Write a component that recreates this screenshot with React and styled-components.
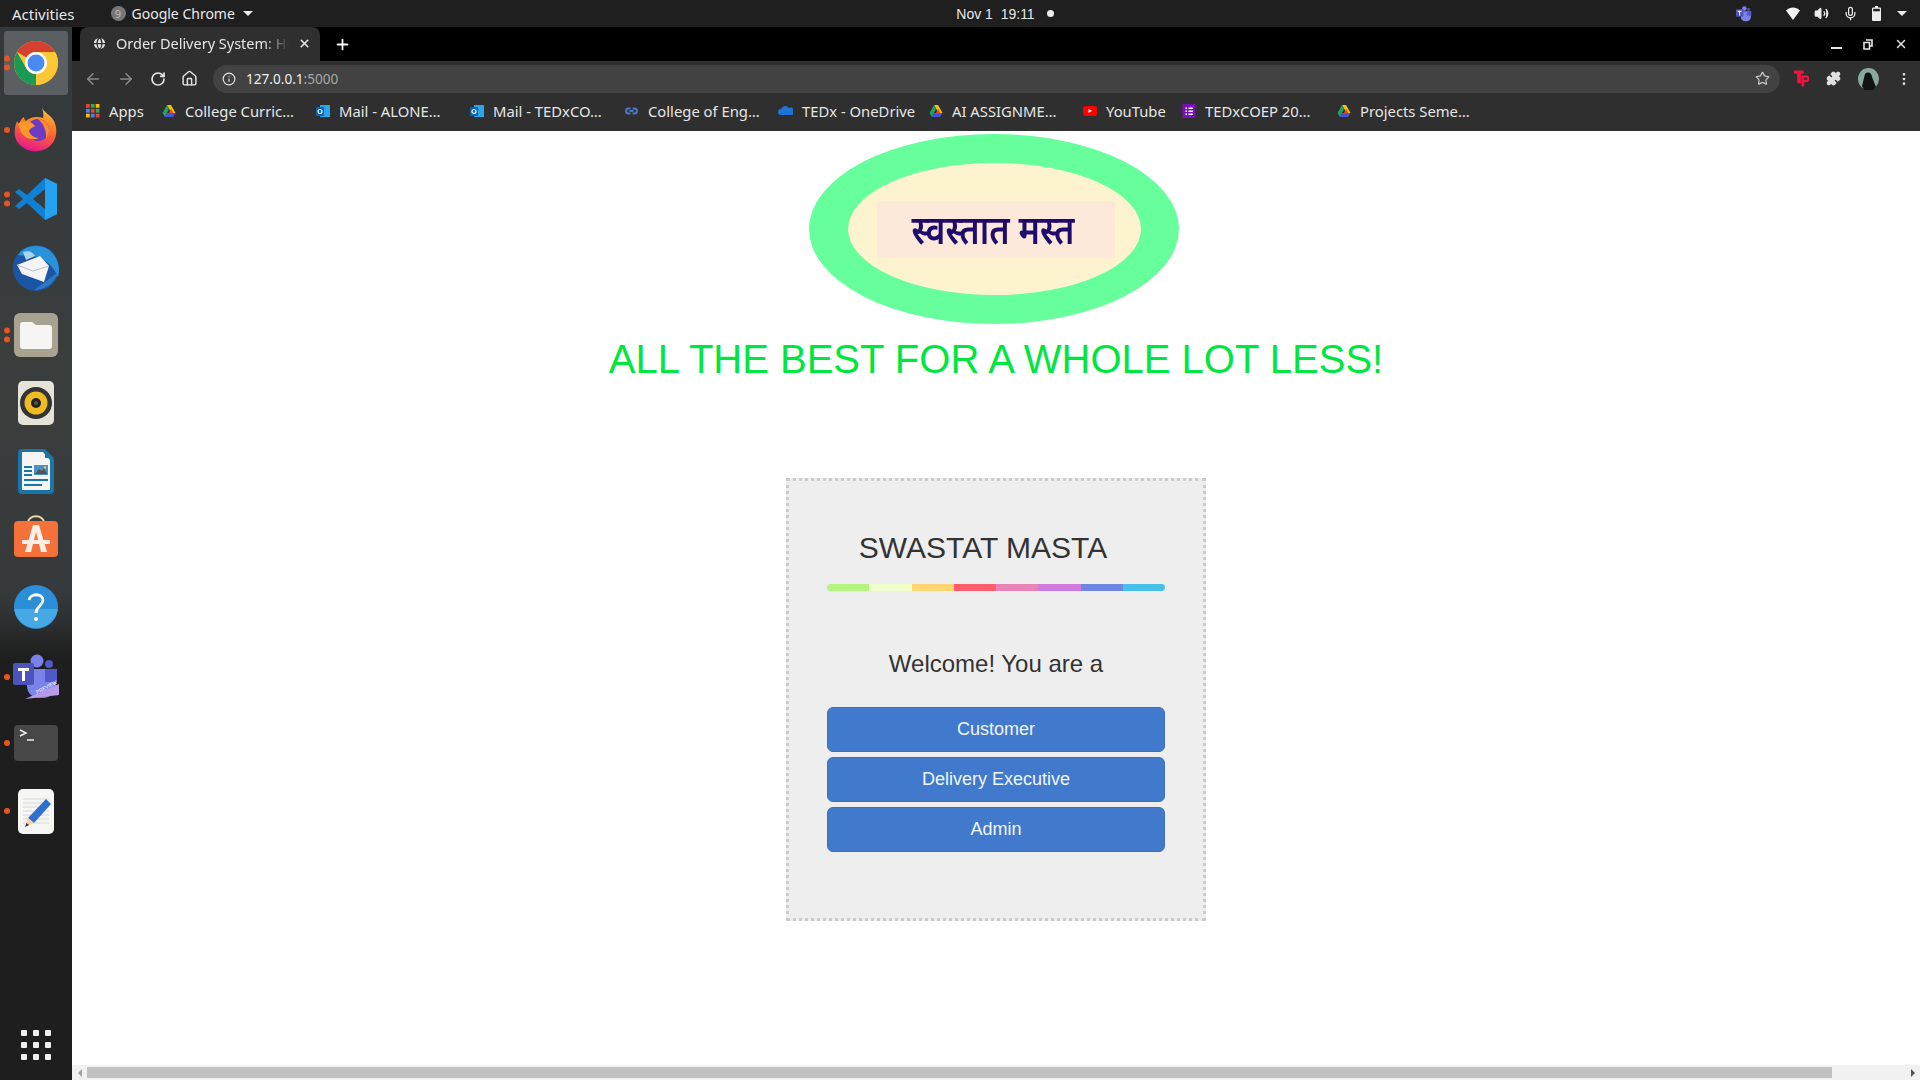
import React from 'react'
import styled, { createGlobalStyle } from 'styled-components'
import { ArrowLeft, ArrowRight, RotateCw, Home, Info, Star, Plus, X, MoreVertical, Puzzle, Volume2, Mic, Globe } from 'lucide-react'

const GlobalStyle = createGlobalStyle`
  html, body {
    margin: 0;
    padding: 0;
    width: 1920px;
    height: 1080px;
    overflow: hidden;
    background: #fff;
    font-family: "Liberation Sans", Arial, sans-serif;
  }
  * { box-sizing: border-box; }
`

// ---- dock icons ----
const CHROME_SLICE = 'M5 13A22 22 0 0 1 43 13H24A11 11 0 0 0 14.500 18.500Z'

const ChromeIcon = () => (
  <svg width="44" height="44" viewBox="2 2 44 44">
    <circle cx="24" cy="24" r="22" fill="#fcc934" />
    <path d={CHROME_SLICE} fill="#d6402f" />
    <path d={CHROME_SLICE} fill="#1b9a55" transform="rotate(-120 24 24)" />
    <path d={CHROME_SLICE} fill="#fcc934" transform="rotate(120 24 24)" />
    <circle cx="24" cy="24" r="11" fill="#fff" />
    <circle cx="24" cy="24" r="8.500" fill="#4a8af4" />
  </svg>
)

const FirefoxIcon = () => (
  <svg width="46" height="46" viewBox="0 0 46 46">
    <defs>
      <linearGradient id="ffx" x1="0.7" y1="0" x2="0.4" y2="1">
        <stop offset="0" stopColor="#ffc22e" />
        <stop offset="0.5" stopColor="#ff6a2a" />
        <stop offset="1" stopColor="#e5178f" />
      </linearGradient>
    </defs>
    <path d="M29 0c1 5 9 8 12 14 4 8 3 19-4 25-8 7-21 7-29 0C1 34 0 23 4 14l2 3c1-3 3-6 5-7 0 2 1 3 2 4 4-4 11-5 17-3 1-3 0-7-1-11z" fill="url(#ffx)" />
    <circle cx="25" cy="23" r="11" fill="#6b3bc4" />
    <path d="M25 12c6 0 11 5 11 11 0 3-1 6-3 8 1-7-3-15-8-19z" fill="#ff8a2a" />
    <path d="M5 17c5-4 13-4 17 2-3 2-5 2-6 5 1 4 5 7 10 7-7 3-15 0-18-6-1-3-2-5-3-8z" fill="#ff9a2a" />
  </svg>
)

const VsCodeIcon = () => (
  <svg width="42" height="42" viewBox="0 0 42 42">
    <path fillRule="evenodd" d="M30 0L42 6V36L30 42L12 25L4 31L0 28L8 21L0 14L4 11L12 17ZM30 11L18 21L30 31Z" fill="#0f80d2" />
    <path d="M30 0L42 6V36L30 42V31V11Z" fill="#22a2f0" />
  </svg>
)

const ThunderbirdIcon = () => (
  <svg width="48" height="48" viewBox="0 0 48 48">
    <circle cx="24" cy="25" r="23" fill="#1b55a6" />
    <path d="M6 12C14 0 34 0 42 12c5 7 6 15 4 22-4-10-14-22-30-21z" fill="#2a93d8" />
    <path d="M22 47c10 0 20-6 24-17-6 2-10 8-24 17z" fill="#2f78c6" />
    <path d="M5 22l23-9 9 10-5 16-22-8z" fill="#f4f4f6" />
    <path d="M5 22l16 6 16-5" fill="none" stroke="#b9bec6" strokeWidth="1" />
    <path d="M11 9c5-2 10 0 12 4l-9 4z" fill="#a8d4f0" />
  </svg>
)

const FilesIcon = () => (
  <svg width="44" height="44" viewBox="0 0 44 44">
    <rect width="44" height="44" rx="6" fill="#a8a291" />
    <path d="M6 12a3 3 0 0 1 3-3h9l4 3h13a3 3 0 0 1 3 3v18a3 3 0 0 1-3 3H9a3 3 0 0 1-3-3z" fill="#f6f5f3" />
  </svg>
)

const RhythmboxIcon = () => (
  <svg width="36" height="44" viewBox="0 0 36 44">
    <rect width="36" height="44" rx="5" fill="#e6e3d9" />
    <circle cx="18" cy="22" r="16" fill="#333" />
    <circle cx="18" cy="22" r="11.500" fill="#eebb22" />
    <circle cx="18" cy="22" r="5" fill="#222" />
    <circle cx="18" cy="22" r="2" fill="#555" />
  </svg>
)

const WriterIcon = () => (
  <svg width="36" height="45" viewBox="0 0 36 45">
    <path d="M4 0h22l10 10v31a4 4 0 0 1-4 4H4a4 4 0 0 1-4-4V4a4 4 0 0 1 4-4z" fill="#1b75a8" />
    <path d="M4 3h21l7 8v29a1 1 0 0 1-1 1H4z" fill="#f5f5f5" />
    <path d="M27 0l9 9h-9z" fill="#1b75a8" />
    <path d="M6 17h8v2H6zM6 21h8v2H6zM6 25h8v2H6zM6 30h24v2H6zM6 35h18v2H6z" fill="#1b75a8" />
    <rect x="16" y="16" width="14" height="10" fill="#4a90c8" />
    <path d="M17 25l4-5 3 2 2-3 3 6z" fill="#555" />
    <circle cx="27" cy="18.500" r="1.200" fill="#f4c430" />
  </svg>
)

const StoreIcon = () => (
  <svg width="44" height="42" viewBox="0 0 44 42">
    <path d="M14 8c0-9 16-9 16 0" fill="none" stroke="#f0d9a8" strokeWidth="2" />
    <rect y="6" width="44" height="36" rx="4" fill="#f5713a" />
    <path d="M19 10h6l8 27h-6l-5-20-5 20h-6z" fill="#fdeee6" />
    <rect x="8" y="25" width="28" height="4" rx="1" fill="#fdeee6" />
  </svg>
)

const HelpIcon = () => (
  <svg width="44" height="44" viewBox="0 0 44 44">
    <circle cx="22" cy="22" r="22" fill="#2a8fd8" />
    <path d="M0.200 24H43.800A22 22 0 0 1 0.200 24Z" fill="#46a8e4" />
    <path d="M15 15c1-7 14-7 14 0 0 6-7 6-7 13" fill="none" stroke="#fff" strokeWidth="2.800" />
    <circle cx="22" cy="34" r="2" fill="#fff" />
  </svg>
)

const TeamsIcon = ({ size = 46, preview = true }) => (
  <svg width={size} height={size} viewBox="0 0 46 46">
    <circle cx="24" cy="7" r="6.500" fill="#7b83eb" />
    <circle cx="36" cy="10" r="4" fill="#5059c9" />
    <path d="M14 15h29v16a13 13 0 0 1-13 13h-4a12 12 0 0 1-12-12z" fill="#7b83eb" />
    <path d="M32 15h12v13H32z" fill="#5059c9" />
    <rect y="9" width="21" height="22" rx="2" fill="#4b53bc" />
    <path d="M5 14h11v3h-4v10H9V17H5z" fill="#fff" />
    {preview && (
      <>
        <path d="M46 30v11l-34 4z" fill="#b79ae8" />
        <text x="24" y="40" fontSize="5" fontFamily="Liberation Sans, sans-serif" fill="#fff" transform="rotate(-28 24 40)">PREVIEW</text>
      </>
    )}
  </svg>
)

const TerminalIcon = () => (
  <svg width="44" height="36" viewBox="0 0 44 36">
    <rect width="44" height="36" rx="4" fill="#474747" />
    <path d="M6 5l6 3-6 3" fill="none" stroke="#eee" strokeWidth="1.500" />
    <path d="M13 15h7" stroke="#eee" strokeWidth="1.500" />
  </svg>
)

const EditorIcon = () => (
  <svg width="36" height="45" viewBox="0 0 36 45">
    <rect width="36" height="45" rx="5" fill="#f6f6f4" />
    <path d="M5 10h26M5 14h26M5 18h26M5 22h26M5 26h26M5 30h26M5 34h26" stroke="#d2d2d0" strokeWidth="0.800" />
    <path d="M28 10l5 5-17 19-6-5z" fill="#2f6fd0" />
    <path d="M10 29l6 5-9 4z" fill="#f6d3ae" />
    <path d="M7 38l1.500-4 2.500 2z" fill="#333" />
  </svg>
)

// ---- favicons and toolbar icons ----
const DriveIcon = () => (
  <svg width="14" height="14" viewBox="0 0 14 14">
    <path d="M5 1h4l4.500 8h-4z" fill="#fbbc04" />
    <path d="M5 1l2 4-4 8-2.500-4z" fill="#1ea362" />
    <path d="M5 9h8.500l-2.500 4H3z" fill="#4a55d6" />
    <path d="M9 5l2.200 4H6.800z" fill="#ea4335" />
  </svg>
)

const OutlookIcon = () => (
  <svg width="14" height="14" viewBox="0 0 14 14">
    <rect x="4" y="1" width="10" height="12" fill="#28a8ea" />
    <rect y="3" width="8" height="9" rx="1" fill="#0f5fb5" />
    <circle cx="4" cy="7.500" r="2" fill="none" stroke="#fff" strokeWidth="1.200" />
  </svg>
)

const APP_COLORS = ['#ea4335', '#34a853', '#fbbc04', '#4285f4', '#ea4335', '#34a853', '#fbbc04', '#4285f4', '#ea4335']

const AppsIcon = () => (
  <svg width="14" height="14" viewBox="0 0 13 13">
    {APP_COLORS.map((c, i) => (
      <rect key={i} x={(i % 3) * 4.500} y={Math.floor(i / 3) * 4.500} width="3.500" height="3.500" fill={c} />
    ))}
  </svg>
)

const LinkIcon = () => (
  <svg width="15" height="14" viewBox="0 0 14 14">
    <path d="M6 4.500H4a2.500 2.500 0 0 0 0 5h2M8 4.500h2a2.500 2.500 0 0 1 0 5H8M5 7h4" fill="none" stroke="#4a78c8" strokeWidth="2" />
  </svg>
)

const OneDriveIcon = () => (
  <svg width="15" height="14" viewBox="0 0 15 14">
    <path d="M3 11a3 3 0 0 1 0-6 4.500 4.500 0 0 1 8-1 3.500 3.500 0 0 1 3 7z" fill="#1f73d6" />
  </svg>
)

const YoutubeIcon = () => (
  <svg width="14" height="14" viewBox="0 0 14 14">
    <rect y="2" width="14" height="10" rx="2.500" fill="#f00" />
    <path d="M5.500 5v4l3.500-2z" fill="#fff" />
  </svg>
)

const FormsIcon = () => (
  <svg width="14" height="14" viewBox="0 0 13 14">
    <rect width="13" height="14" fill="#7b10b8" />
    <path d="M3 3.500h1.500V5H3zM6 3.500h4.500V5H6zM3 6.500h1.500V8H3zM6 6.500h4.500V8H6zM3 9.500h1.500V11H3zM6 9.500h4.500V11H6z" fill="#fff" />
  </svg>
)

const WifiIcon = () => (
  <svg width="14" height="13" viewBox="0 0 14 13">
    <path d="M0 3.500C4-.500 10-.500 14 3.500L7 13z" fill="#f2f2f2" />
  </svg>
)

const BatteryIcon = () => (
  <svg width="9" height="15" viewBox="0 0 9 15">
    <path d="M3 0h3v1.500h2a1 1 0 0 1 1 1V14a1 1 0 0 1-1 1H1a1 1 0 0 1-1-1V2.500a1 1 0 0 1 1-1h2z" fill="#eee" />
    <rect x="1.200" y="2.800" width="6.600" height="2.500" fill="#222" />
  </svg>
)

const WindowRestore = () => (
  <svg width="10" height="11" viewBox="0 0 10 11">
    <path d="M3 1h6v6H7M1 3.500h5.500V10H1z" fill="none" stroke="#e6e6e6" strokeWidth="1.600" />
  </svg>
)

const TpIcon = () => (
  <svg width="15" height="17" viewBox="0 0 14 15">
    <path d="M0 0h9v3H6.500v9H3V3H0z" fill="#f0133d" />
    <path d="M7 4.500h4a3.200 3.200 0 0 1 0 6.500H9.500v4H7zM9.500 6.500v2.500H11a1.200 1.200 0 0 0 0-2.500z" fill="#f0133d" fillRule="evenodd" />
  </svg>
)

const Avatar = () => (
  <svg width="21" height="22" viewBox="0 0 21 22">
    <ellipse cx="10.500" cy="11" rx="10.500" ry="11" fill="#8aa89e" />
    <path d="M7 6c3-3 7-1 7 3l4 10-3 3H6l-2-4z" fill="#0f1412" />
  </svg>
)

// ---- data ----
const dockApps = [
  { key: 'chrome', icon: <ChromeIcon />, dots: 2, active: true, h: 64 },
  { key: 'firefox', icon: <FirefoxIcon />, dots: 1, h: 68 },
  { key: 'code', icon: <VsCodeIcon />, dots: 2, h: 70 },
  { key: 'mail', icon: <ThunderbirdIcon />, dots: 0, h: 66 },
  { key: 'files', icon: <FilesIcon />, dots: 2, h: 70 },
  { key: 'music', icon: <RhythmboxIcon />, dots: 0, h: 66 },
  { key: 'writer', icon: <WriterIcon />, dots: 0, h: 70 },
  { key: 'store', icon: <StoreIcon />, dots: 0, h: 60 },
  { key: 'help', icon: <HelpIcon />, dots: 0, h: 82 },
  { key: 'teams', icon: <TeamsIcon />, dots: 1, h: 58 },
  { key: 'term', icon: <TerminalIcon />, dots: 1, h: 74 },
  { key: 'edit', icon: <EditorIcon />, dots: 1, h: 62 },
]

const bookmarks = [
  { icon: <AppsIcon />, label: 'Apps', width: 76 },
  { icon: <DriveIcon />, label: 'College Curric…', width: 154 },
  { icon: <OutlookIcon />, label: 'Mail - ALONE…', width: 154 },
  { icon: <OutlookIcon />, label: 'Mail - TEDxCO…', width: 154 },
  { icon: <LinkIcon />, label: 'College of Eng…', width: 154 },
  { icon: <OneDriveIcon />, label: 'TEDx - OneDrive', width: 151 },
  { icon: <DriveIcon />, label: 'AI ASSIGNME…', width: 154 },
  { icon: <YoutubeIcon />, label: 'YouTube', width: 99 },
  { icon: <FormsIcon />, label: 'TEDxCOEP 20…', width: 155 },
  { icon: <DriveIcon />, label: 'Projects Seme…', width: 150 },
]

const stripeColors = ['#b4f481', '#eefdc9', '#ffd772', '#ff5c6c', '#e883b8', '#d07ade', '#6d86df', '#46c0e6']

const App = () => (
  <Screen>
    <GlobalStyle />
    <TopBar>
      <TopLeft>
        <Activities>Activities</Activities>
        <AppMenu>
          <AppDot>9</AppDot>
          Google Chrome
          <Caret />
        </AppMenu>
      </TopLeft>
      <Clock>
        Nov 1&nbsp;&nbsp;19:11
        <ClockDot />
      </Clock>
      <Tray>
        <TrayTeams><TeamsIcon size={16} preview={false} /></TrayTeams>
        <WifiIcon />
        <Volume2 size={15} color="#eee" fill="#eee" />
        <Mic size={15} color="#eee" />
        <BatteryIcon />
        <Caret />
      </Tray>
    </TopBar>
    <Body>
      <Dock>
        <DockList>
          {dockApps.map(app => (
            <DockItem key={app.key} $h={app.h} $active={app.active}>
              {app.dots > 0 && (
                <Dots>
                  {Array.from({ length: app.dots }).map((_, i) => <Dot key={i} />)}
                </Dots>
              )}
              {app.icon}
            </DockItem>
          ))}
        </DockList>
        <AppGrid>
          {Array.from({ length: 9 }).map((_, i) => <GridDot key={i} />)}
        </AppGrid>
      </Dock>
      <Browser>
        <TabStrip>
          <Tab>
            <Globe size={15} color="#2f2f2f" fill="#e6e6e6" />
            <TabTitle>Order Delivery System: Home</TabTitle>
            <X size={13} color="#e6e6e6" strokeWidth={3} />
          </Tab>
          <NewTab><Plus size={17} color="#fff" strokeWidth={2.500} /></NewTab>
          <WindowControls>
            <MinimizeBar />
            <WindowRestore />
            <X size={14} color="#e6e6e6" strokeWidth={2.500} />
          </WindowControls>
        </TabStrip>
        <Toolbar>
          <NavIcons>
            <ArrowLeft size={18} color="#8a8a8a" />
            <ArrowRight size={18} color="#8a8a8a" />
            <RotateCw size={16} color="#e6e6e6" strokeWidth={2.500} />
            <Home size={17} color="#e6e6e6" />
          </NavIcons>
          <Omnibox>
            <Info size={14} color="#e6e6e6" />
            <Url>127.0.0.1<UrlPort>:5000</UrlPort></Url>
            <OmniStar><Star size={15} color="#c4c4c4" /></OmniStar>
          </Omnibox>
          <ExtIcons>
            <TpIcon />
            <Puzzle size={15} color="#e0e0e0" fill="#e0e0e0" />
            <Avatar />
            <MoreVertical size={16} color="#e0e0e0" />
          </ExtIcons>
        </Toolbar>
        <BookmarkBar>
          {bookmarks.map(b => (
            <Bookmark key={b.label} $w={b.width}>
              {b.icon}
              <span>{b.label}</span>
            </Bookmark>
          ))}
        </BookmarkBar>
        <Viewport>
          <Page>
            <Logo>
              <LogoInner>
                <LogoPlate><LogoText>स्वस्तात मस्त</LogoText></LogoPlate>
              </LogoInner>
            </Logo>
            <Tagline>ALL THE BEST FOR A WHOLE LOT LESS!</Tagline>
            <Card>
              <CardTitle>SWASTAT MASTA</CardTitle>
              <Stripe>
                {stripeColors.map(c => <StripePart key={c} $c={c} />)}
              </Stripe>
              <Welcome>Welcome! You are a</Welcome>
              <RoleList>
                <RoleButton>Customer</RoleButton>
                <RoleButton>Delivery Executive</RoleButton>
                <RoleButton>Admin</RoleButton>
              </RoleList>
            </Card>
          </Page>
          <ScrollBar>
            <ScrollArrow $dir="left" />
            <ScrollTrack><ScrollThumb /></ScrollTrack>
            <ScrollArrow $dir="right" />
          </ScrollBar>
        </Viewport>
      </Browser>
    </Body>
  </Screen>
)

export default App

const Screen = styled.div`
  width: 1920px;
  height: 1080px;
  display: flex;
  flex-direction: column;
  overflow: hidden;
`
const TopBar = styled.div`
  height: 27px;
  flex: none;
  background: #1f1f1f;
  color: #e8e8e8;
  font: 14px "Noto Sans", "Open Sans", sans-serif;
  display: grid;
  grid-template-columns: 1fr auto 1fr;
  align-items: center;
  padding: 0 12px;
`
const TopLeft = styled.div`
  display: flex;
  align-items: center;
  gap: 36px;
`
const Activities = styled.span`
  font-size: 15px;
`
const AppMenu = styled.div`
  display: flex;
  align-items: center;
  gap: 6px;
`
const AppDot = styled.span`
  width: 15px;
  height: 15px;
  border-radius: 50%;
  background: #777;
  color: #bbb;
  font-size: 11px;
  line-height: 15px;
  text-align: center;
`
const Caret = styled.span`
  width: 0;
  height: 0;
  margin-left: 2px;
  border-left: 5px solid transparent;
  border-right: 5px solid transparent;
  border-top: 5px solid #eee;
`
const Clock = styled.div`
  display: flex;
  align-items: center;
  gap: 12px;
  padding-left: 90px;
  font-family: "Liberation Sans", sans-serif;
`
const ClockDot = styled.span`
  width: 7px;
  height: 7px;
  border-radius: 50%;
  background: #eee;
`
const Tray = styled.div`
  justify-self: end;
  display: flex;
  align-items: center;
  gap: 14px;
  padding-right: 1px;
`
const TrayTeams = styled.span`
  display: flex;
  margin-right: 20px;
`
const Body = styled.div`
  flex: 1;
  min-height: 0;
  display: flex;
`
const Dock = styled.div`
  width: 72px;
  flex: none;
  background: linear-gradient(180deg, #33383b 0%, #3b3e3d 35%, #36393a 54%, #2b2c2d 57%, #1e1e1e 60%, #1e1e1e 100%);
  display: flex;
  flex-direction: column;
  justify-content: space-between;
  padding-top: 4px;
`
const DockList = styled.div`
  display: flex;
  flex-direction: column;
`
const DockItem = styled.div`
  position: relative;
  height: ${p => p.$h}px;
  flex: none;
  display: flex;
  align-items: center;
  justify-content: center;
  margin: 0 4px ${p => (p.$active ? 1 : 0)}px;
  border-radius: 3px;
  background: ${p => (p.$active ? '#5b5f61' : 'transparent')};
`
const Dots = styled.div`
  position: absolute;
  left: 0;
  top: 50%;
  transform: translateY(-50%);
  display: flex;
  flex-direction: column;
  gap: 3px;
`
const Dot = styled.span`
  width: 6px;
  height: 6px;
  border-radius: 50%;
  background: #e95420;
`
const AppGrid = styled.div`
  display: grid;
  grid-template-columns: repeat(3, 6px);
  gap: 6px;
  justify-content: center;
  padding-bottom: 20px;
`
const GridDot = styled.span`
  width: 6px;
  height: 6px;
  border-radius: 1px;
  background: #efefef;
`
const Browser = styled.div`
  flex: 1;
  min-width: 0;
  display: flex;
  flex-direction: column;
`
const TabStrip = styled.div`
  height: 34px;
  flex: none;
  background: #000;
  display: flex;
  align-items: flex-end;
  padding-left: 8px;
`
const Tab = styled.div`
  width: 240px;
  height: 34px;
  background: #2f2f2f;
  border-radius: 8px 8px 0 0;
  display: flex;
  align-items: center;
  gap: 9px;
  padding: 0 9px 2px 12px;
  color: #e6e6e6;
  font: 14.500px "Noto Sans", sans-serif;
`
const TabTitle = styled.span`
  flex: 1;
  overflow: hidden;
  white-space: nowrap;
  mask-image: linear-gradient(90deg, #000 85%, transparent);
`
const NewTab = styled.div`
  height: 34px;
  width: 44px;
  display: flex;
  align-items: center;
  justify-content: center;
`
const WindowControls = styled.div`
  margin-left: auto;
  height: 34px;
  display: flex;
  align-items: center;
  gap: 21px;
  padding-right: 12px;
`
const MinimizeBar = styled.span`
  width: 11px;
  height: 2px;
  margin-top: 8px;
  background: #e6e6e6;
`
const Toolbar = styled.div`
  height: 35px;
  flex: none;
  background: #2f2f2f;
  display: flex;
  align-items: center;
  padding: 0 0 0 12px;
`
const NavIcons = styled.div`
  display: flex;
  align-items: center;
  gap: 15px;
  width: 129px;
  flex: none;
`
const Omnibox = styled.div`
  width: 1567px;
  height: 28px;
  flex: none;
  background: #424242;
  border-radius: 14px;
  display: flex;
  align-items: center;
  gap: 10px;
  padding: 0 10px 0 9px;
`
const Url = styled.span`
  color: #eee;
  font: 13.600px "Noto Sans", sans-serif;
`
const UrlPort = styled.span`
  color: #a8a8a8;
`
const OmniStar = styled.span`
  margin-left: auto;
  display: flex;
`
const ExtIcons = styled.div`
  display: flex;
  align-items: center;
  gap: 17px;
  margin-left: 14px;
`
const BookmarkBar = styled.div`
  height: 35px;
  flex: none;
  background: #2f2f2f;
  display: flex;
  align-items: center;
  padding: 0 0 6px 14px;
  color: #e6e6e6;
  font: 14.800px "Noto Sans", sans-serif;
`
const Bookmark = styled.div`
  width: ${p => p.$w}px;
  flex: none;
  display: flex;
  align-items: center;
  gap: 9px;
  white-space: nowrap;
`
const Viewport = styled.div`
  flex: 1;
  min-height: 0;
  display: flex;
  flex-direction: column;
  background: #fff;
`
const Page = styled.div`
  flex: 1;
  min-height: 0;
  display: flex;
  flex-direction: column;
  align-items: center;
  padding-top: 3px;
`
const Logo = styled.div`
  width: 370px;
  height: 190px;
  margin-right: 5px;
  border-radius: 50%;
  background: #66ff9c;
  display: flex;
  align-items: center;
  justify-content: center;
`
const LogoInner = styled.div`
  width: 293px;
  height: 132px;
  margin-left: 1px;
  border-radius: 50%;
  background: #fdf3cf;
  display: flex;
  align-items: center;
  justify-content: center;
`
const LogoPlate = styled.div`
  width: 238px;
  height: 57px;
  margin-left: 4px;
  padding-right: 6px;
  background: #fde9da;
  color: #1f0a6e;
  font: 600 34px "Noto Sans", "Noto Sans Devanagari", "Lohit Devanagari", sans-serif;
  display: flex;
  align-items: center;
  justify-content: center;
`
const LogoText = styled.span`
  display: inline-block;
  transform: scaleY(1.18);
`
const Tagline = styled.h1`
  margin: 11px 0 0;
  color: #00e640;
  font: 400 40px/48px "Liberation Sans", sans-serif;
  white-space: nowrap;
`
const Card = styled.div`
  width: 420px;
  height: 443px;
  margin-top: 95px;
  background: #eee;
  border: 3px dotted #ccc;
  padding: 0 38px;
  display: flex;
  flex-direction: column;
`
const CardTitle = styled.h2`
  margin: 49px 0 0;
  padding-right: 26px;
  text-align: center;
  color: #333;
  font: 400 30px/36px "Liberation Sans", sans-serif;
`
const Stripe = styled.div`
  height: 7px;
  margin-top: 18px;
  border-radius: 4px;
  overflow: hidden;
  display: flex;
`
const StripePart = styled.span`
  flex: 1;
  background: ${p => p.$c};
`
const Welcome = styled.p`
  margin: 57px 0 0;
  text-align: center;
  color: #333;
  font: 400 24px/32px "Liberation Sans", sans-serif;
`
const RoleList = styled.div`
  margin-top: 27px;
  display: flex;
  flex-direction: column;
  gap: 5px;
`
const RoleButton = styled.button`
  height: 45px;
  border: 1px solid #3a70bd;
  border-radius: 6px;
  background: #417acc;
  color: #f0f5ff;
  font: 18px "Liberation Sans", sans-serif;
  padding: 0;
`
const ScrollBar = styled.div`
  height: 15px;
  flex: none;
  background: #f1f1f1;
  display: flex;
  align-items: center;
`
const ScrollArrow = styled.span`
  width: 15px;
  flex: none;
  display: flex;
  justify-content: center;
  &::before {
    content: "";
    border-top: 4px solid transparent;
    border-bottom: 4px solid transparent;
    ${p => (p.$dir === 'left' ? 'border-right: 4px solid #a0a0a0;' : 'border-left: 4px solid #505050;')}
  }
`
const ScrollTrack = styled.div`
  flex: 1;
  height: 11px;
`
const ScrollThumb = styled.div`
  width: 1745px;
  height: 11px;
  background: #c1c1c1;
`
